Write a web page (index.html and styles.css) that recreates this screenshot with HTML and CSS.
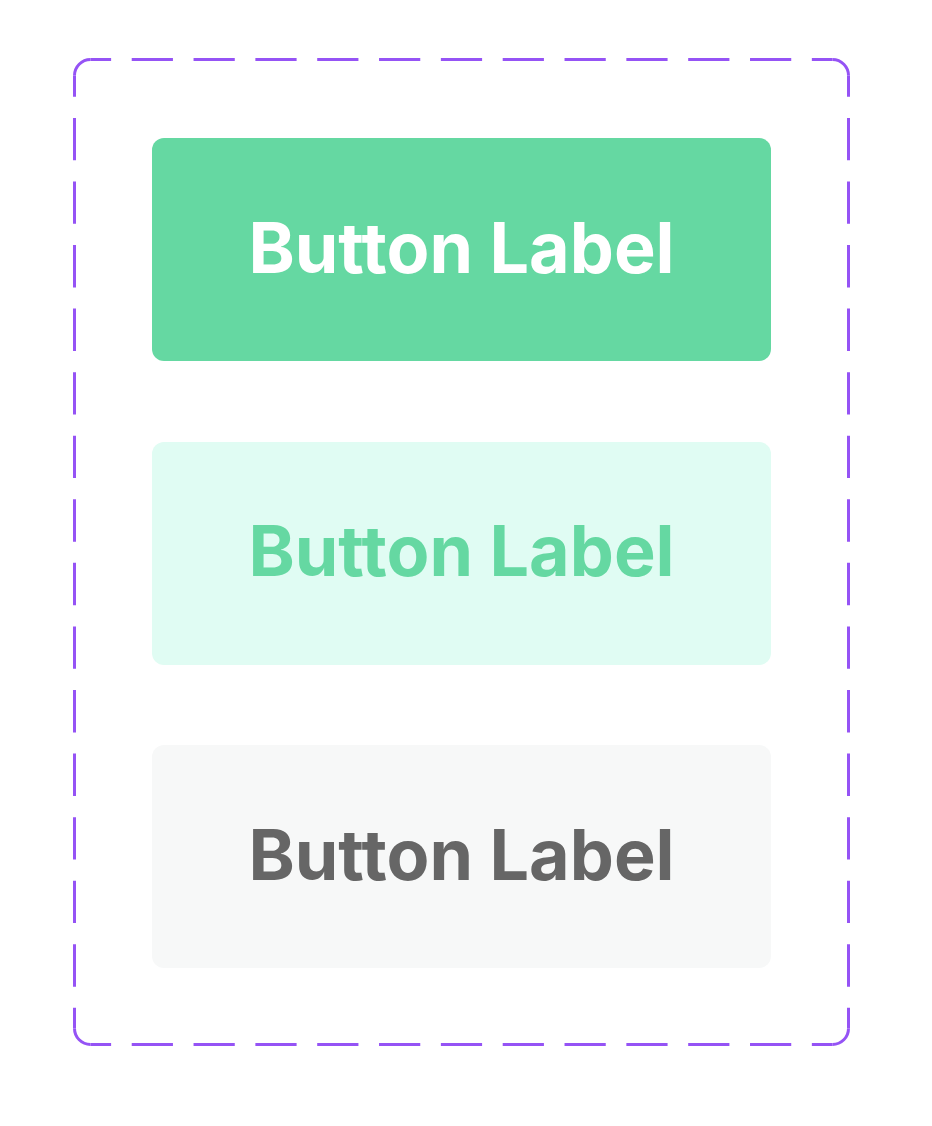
FILE: index.html
```html
<!DOCTYPE html>
<html lang="en">
<head>
<meta charset="utf-8">
<title>Button variants</title>
<link rel="stylesheet" href="styles.css">
</head>
<body>
  <div class="page">
    <div class="frame">
      <svg class="frame-border" width="777" height="988" viewBox="0 0 777 988" aria-hidden="true">
        <g fill="none" stroke="#9553F5" stroke-width="3">
          <path d="M1.5 17.5 A16 16 0 0 1 17.5 1.5"/>
          <path d="M759.5 1.5 A16 16 0 0 1 775.5 17.5"/>
          <path d="M775.5 970.5 A16 16 0 0 1 759.5 986.5"/>
          <path d="M17.5 986.5 A16 16 0 0 1 1.5 970.5"/>
          <path d="M17.5 1.5 H759.5" stroke-dasharray="41.22 20.61" stroke-dashoffset="20.61"/>
          <path d="M17.5 986.5 H759.5" stroke-dasharray="41.22 20.61" stroke-dashoffset="20.61"/>
          <path d="M1.5 17.5 V970.5" stroke-dasharray="42.38 21.19" stroke-dashoffset="21.19"/>
          <path d="M775.5 17.5 V970.5" stroke-dasharray="42.38 21.19" stroke-dashoffset="21.19"/>
        </g>
      </svg>
      <button class="btn btn-primary">Button Label</button>
      <button class="btn btn-secondary">Button Label</button>
      <button class="btn btn-tertiary">Button Label</button>
    </div>
  </div>
</body>
</html>
```
FILE: styles.css
```css
html, body {
  margin: 0;
  padding: 0;
  background: #ffffff;
}

.page {
  width: 932px;
  height: 1126px;
  padding: 58px 0 0 73px;
  box-sizing: border-box;
}

.frame {
  position: relative;
  width: 777px;
  height: 988px;
  box-sizing: border-box;
  padding: 80px 79px 0 79px;
  display: flex;
  flex-direction: column;
  gap: 80.5px;
}

.frame-border {
  position: absolute;
  left: 0;
  top: 0;
  pointer-events: none;
}

.btn {
  height: 223px;
  width: 619px;
  border: none;
  border-radius: 12px;
  display: flex;
  align-items: center;
  justify-content: center;
  font-family: Inter, "Noto Sans", sans-serif;
  font-weight: 700;
  font-size: 70px;
  line-height: 1;
  padding: 0 0 4px 0;
  margin: 0;
}

.btn-primary {
  background: #65D8A2;
  color: #ffffff;
}

.btn-secondary {
  background: #E0FCF3;
  color: #65D8A2;
}

.btn-tertiary {
  background: #F7F8F8;
  color: #666666;
}
```
